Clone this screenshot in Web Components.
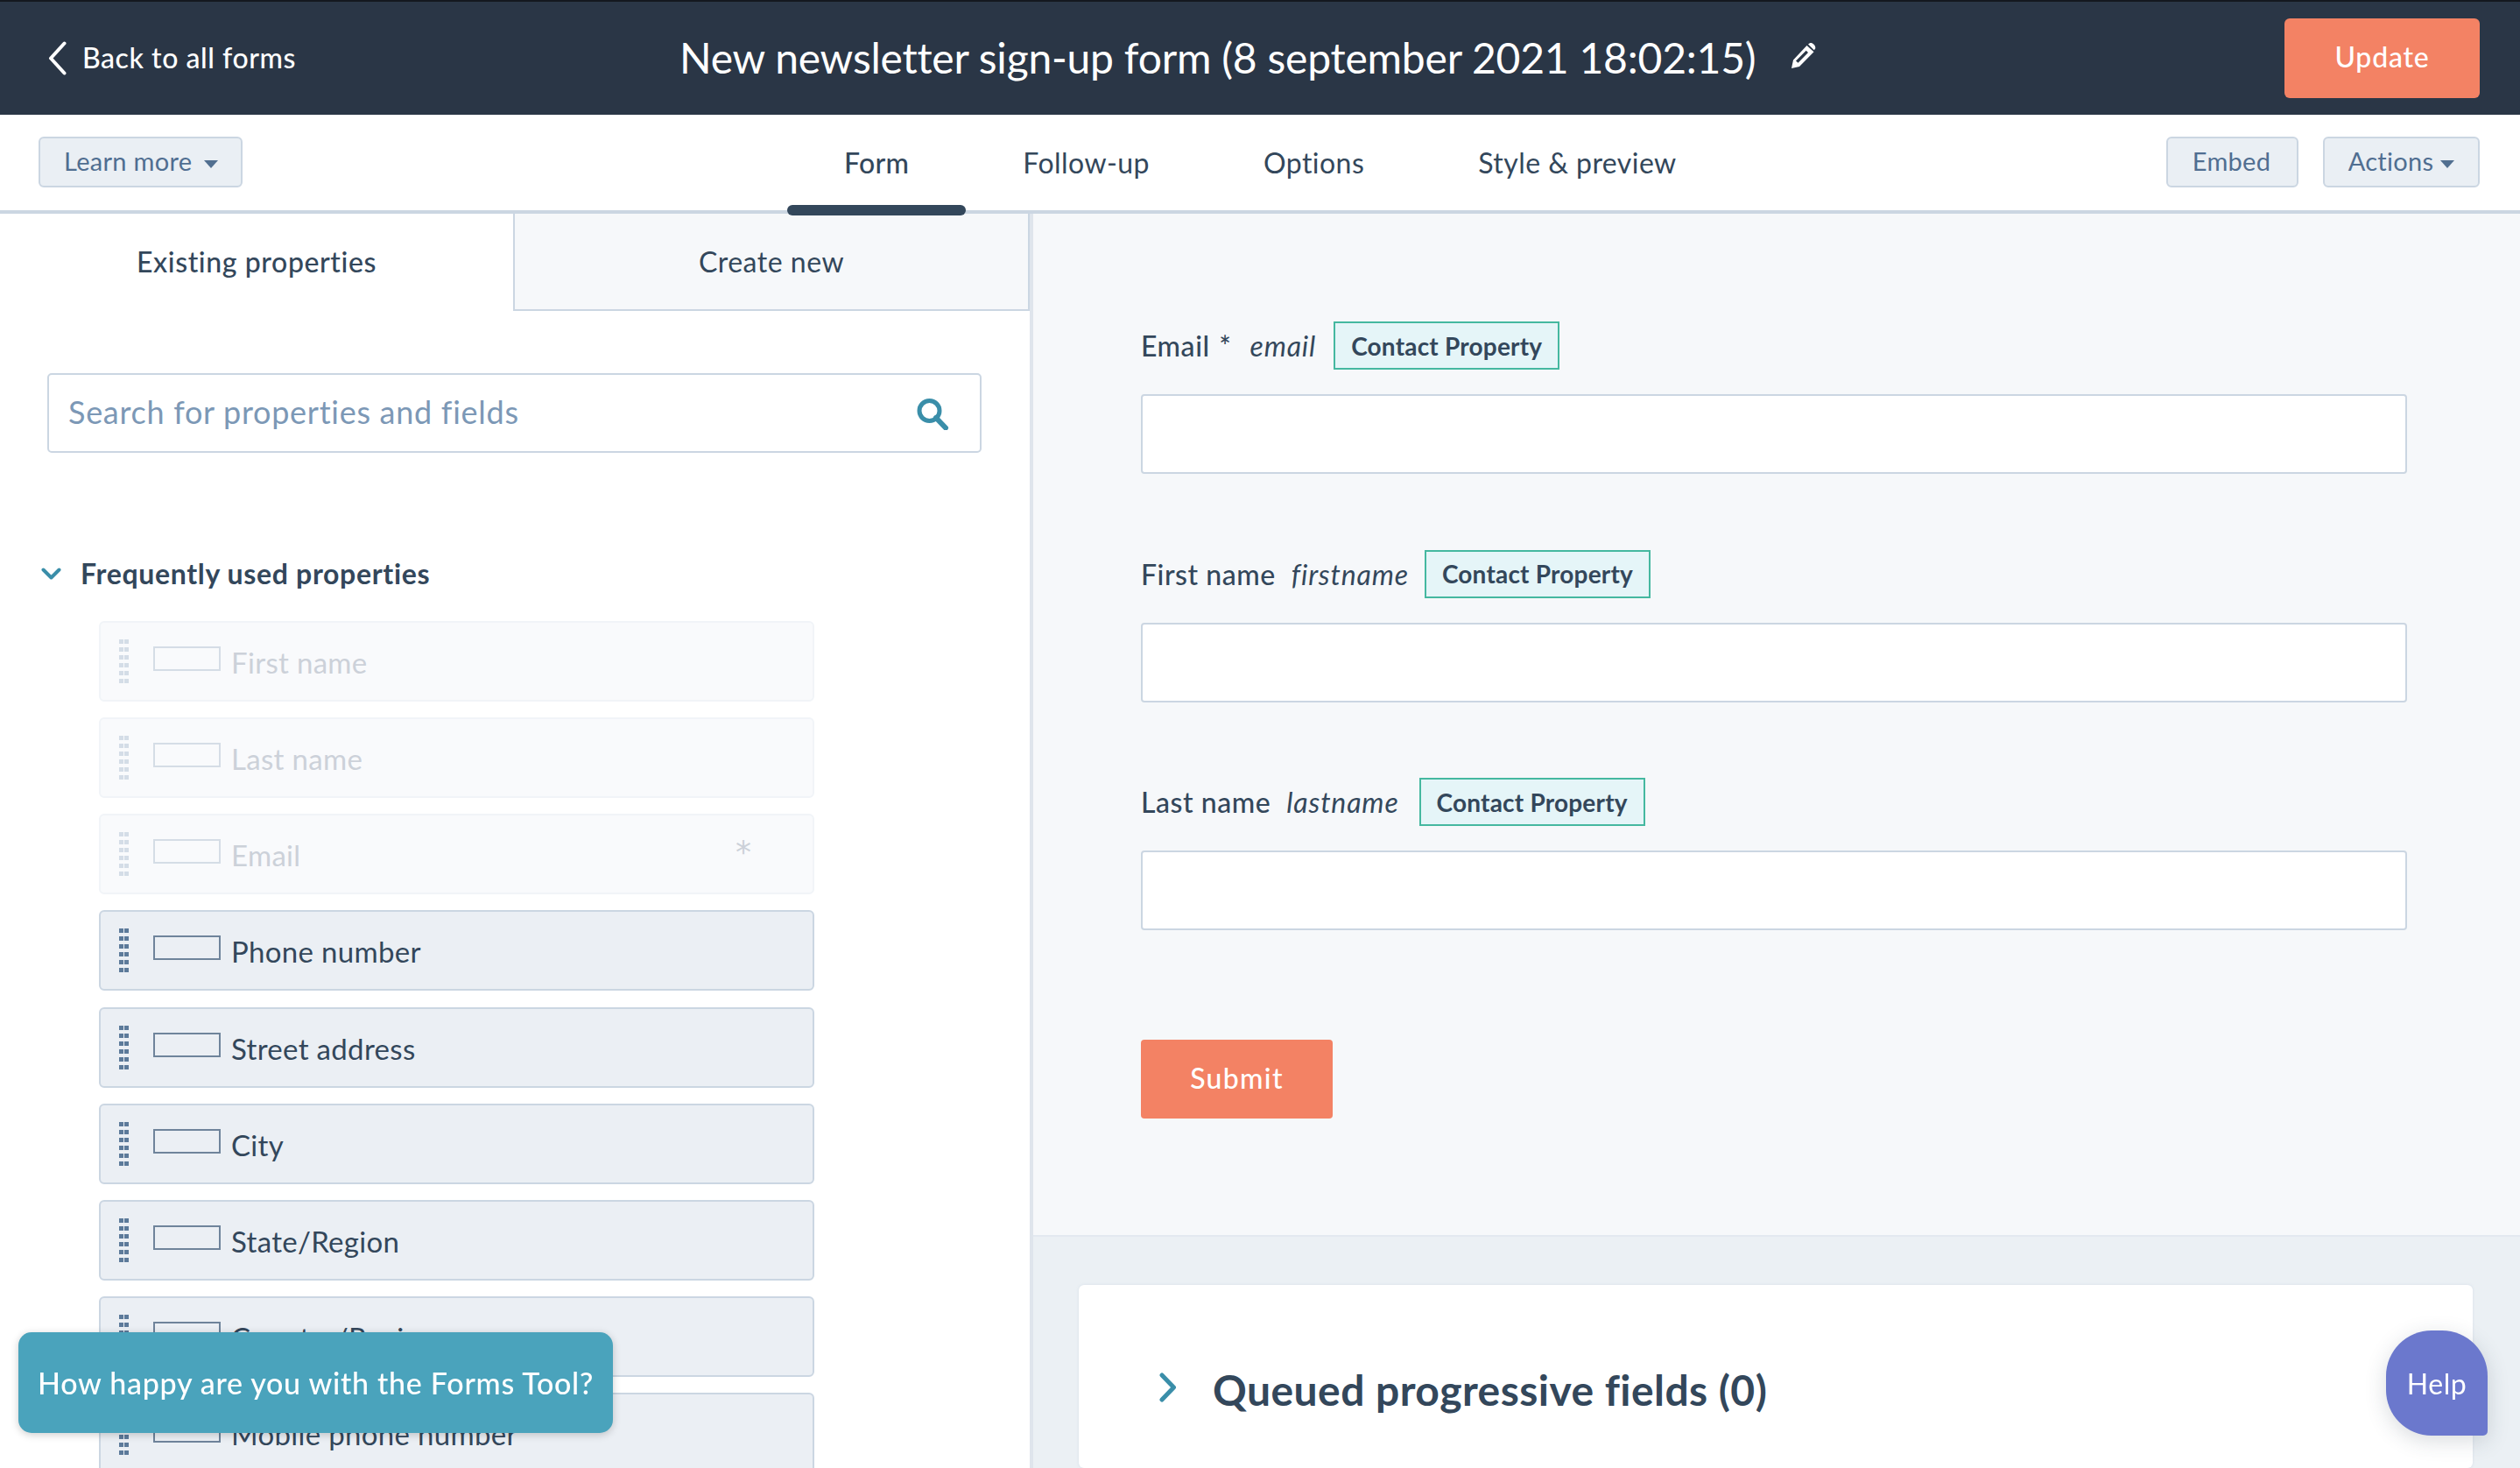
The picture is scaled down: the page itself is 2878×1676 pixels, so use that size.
<!DOCTYPE html>
<html lang="en"><head><meta charset="utf-8"><title>Form editor</title>
<style>
html,body{margin:0;padding:0;height:1676px;overflow:hidden;background:#fff}
body{font-family:Lato,"Noto Sans",sans-serif;color:#33475b}
</style></head><body>
<form-app></form-app>
<script>
const def=(name,css,html,init)=>{customElements.define(name,class extends HTMLElement{connectedCallback(){if(this.shadowRoot)return;const r=this.attachShadow({mode:'open'});r.innerHTML='<style>'+css+'</style>'+(typeof html==='function'?html(this):html);if(init)init(this,r);}})};
const caret='<svg width="16" height="9" viewBox="0 0 16 9"><path d="M0 0h16L8 9z" fill="#516f90"/></svg>';

def('top-bar',`
:host{display:flex;align-items:center;box-sizing:border-box;height:131px;background:#2a3646;border-top:2px solid #14181f;color:#fff;padding:0 46px 0 55px}
.back{display:flex;align-items:center;gap:18px;width:721px;font-size:32px;font-weight:500;letter-spacing:.55px}
.back span{margin-top:-2px}
h1{margin:0;font-size:48px;font-weight:400;letter-spacing:-.22px;white-space:nowrap;line-height:60px;margin-top:-2px}
svg.p{margin-left:41px;margin-top:-6px}
.sp{flex:1}
`,`<div class="back"><svg width="21" height="39" viewBox="0 0 21 39"><path d="M18.500 2.500L3 19.500L18.500 36.500" fill="none" stroke="#fff" stroke-width="4" stroke-linecap="round" stroke-linejoin="round"/></svg><span>Back to all forms</span></div>
<h1>New newsletter sign-up form (8 september 2021 18:02:15)</h1>
<svg class="p" width="28" height="29" viewBox="0 0 28 29"><path d="M19 1.500l1.500-1c1.500-.8 3.500-.3 5 1.200s2.300 3.500 1.500 5l-1.200 1.600zM17.500 3l8 7.200L9 27 0 29l2-9.500zM5 20.500l2.500 2.300L19 11l-2.300-2.200z" fill="#fff" fill-rule="evenodd"/></svg>
<span class="sp"></span><ui-btn primary>Update</ui-btn>`);

def('ui-btn',`
:host{display:inline-flex;align-items:center;justify-content:center;box-sizing:border-box;border-radius:6px;font-size:29px;letter-spacing:.3px;white-space:nowrap}
:host([secondary]){height:58px;background:#eaeff4;border:2px solid #cbd6e2;color:#506e91;padding:0 26px 3px 27px;gap:14px}
:host([primary]){width:223px;height:91px;background:#f38264;color:#fff;font-size:32px;font-weight:500;letter-spacing:.8px;padding-bottom:5px}
:host([submit]){width:219px;height:90px;background:#f38264;color:#fff;font-size:32px;font-weight:500;letter-spacing:1.3px;border-radius:4px}
svg{margin-top:7px}
`,h=>`<slot></slot>${h.hasAttribute('caret')?caret:''}`);

def('sub-nav',`
:host{display:flex;box-sizing:border-box;height:113px;border-bottom:4px solid #cbd6e2;position:relative;z-index:2;background:#fff}
.l{width:899px;box-sizing:border-box;padding:25px 0 0 44px}
.t{display:flex;flex:1}
.tab{padding:0 65px;font-size:32px;letter-spacing:.45px;line-height:60px;height:109px;box-sizing:border-box;padding-top:25px;position:relative;white-space:nowrap}
.tab.on{font-weight:500;letter-spacing:.3px}
.tab.on::after{content:"";position:absolute;left:0;right:0;bottom:-6px;height:12px;background:#33475b;border-radius:6px}
.r{display:flex;gap:28px;padding:25px 46px 0 0}
`,`<div class="l"><ui-btn secondary caret>Learn more</ui-btn></div>
<div class="t"><div class="tab on">Form</div><div class="tab">Follow-up</div><div class="tab">Options</div><div class="tab">Style &amp; preview</div></div>
<div class="r"><ui-btn secondary style="width:151px;padding:0 2px 3px 0">Embed</ui-btn><ui-btn secondary caret style="width:179px;padding:0 0 3px;gap:8px">Actions</ui-btn></div>`);

def('prop-tabs',`
:host{display:flex;height:111px;font-size:32px;letter-spacing:.6px}
div{flex:1;display:flex;align-items:center;justify-content:center;box-sizing:border-box;padding-bottom:3px}
.a{font-weight:500}
.b{background:#f6f8fa;border:solid #cbd6e2;border-width:0 2px 2px 2px;letter-spacing:.5px;padding-bottom:1px}
`,`<div class="a">Existing properties</div><div class="b">Create new</div>`);

def('prop-search',`
:host{display:flex;align-items:center;justify-content:space-between;box-sizing:border-box;height:91px;margin:71px 55px 0 54px;border:2px solid #cbd6e2;border-radius:5px;background:#fff;padding:0 35px 3px 22px;font-size:36px;letter-spacing:.72px;color:#7c98b6}
svg{margin-top:6px}
`,`<span>Search for properties and fields</span><svg width="37" height="36" viewBox="0 0 37 36"><circle cx="14.500" cy="14" r="11.500" fill="none" stroke="#3a8ea9" stroke-width="5"/><path d="M22 22l11 11.500" stroke="#3a8ea9" stroke-width="6" stroke-linecap="round"/></svg>`);

def('prop-row',`
:host{display:flex;box-sizing:border-box;height:92px;background:#ebeff4;border:2px solid #cbd6e2;border-radius:6px;padding:19px 0 0 21px;position:relative;color:#33475b;font-size:33px;letter-spacing:.32px}
:host([off]){background:#f9fafc;border-color:#f1f4f8;color:#ccd1d9}
.d{display:grid;grid-template-columns:5px 5px;gap:4px 1px;height:50px;width:11px;flex:none}
.d i{background:#5c7a9a}
:host([off]) .d i{background:#d4dde7}
.b{width:77px;height:28px;box-sizing:border-box;border:2px solid #6f849b;margin:8px 12px 0 28px;flex:none}
:host([off]) .b{border-color:#d5dde6}
.x{line-height:40px;margin-top:6px;white-space:nowrap}
.s{position:absolute;left:725px;top:16px;font:36px/52px "DejaVu Sans",sans-serif}
`,h=>`<div class="d">${'<i></i>'.repeat(12)}</div><div class="b"></div><span class="x"><slot></slot></span>${h.hasAttribute('req')?'<span class="s">*</span>':''}`);

def('prop-panel',`
:host{display:block;width:1180px;flex:none;box-sizing:border-box;border-right:4px solid #dfe5ec;height:100%;overflow:hidden;background:#fff}
h2{display:flex;align-items:center;gap:22px;margin:116px 0 32px 47px;font-size:32px;font-weight:700;line-height:44px;letter-spacing:.67px}
.l{display:flex;flex-direction:column;gap:18.150px;margin:0 246px 0 113px}
`,`<prop-tabs></prop-tabs><prop-search></prop-search>
<h2><svg width="23" height="14" viewBox="0 0 23 14"><path d="M2.500 2.500L11.500 11.500L20.500 2.500" fill="none" stroke="#3a8ea9" stroke-width="4" stroke-linecap="round" stroke-linejoin="round"/></svg>Frequently used properties</h2>
<div class="l"><prop-row off>First name</prop-row><prop-row off>Last name</prop-row><prop-row off req>Email</prop-row><prop-row>Phone number</prop-row><prop-row>Street address</prop-row><prop-row>City</prop-row><prop-row>State/Region</prop-row><prop-row>Country/Region</prop-row><prop-row>Mobile phone number</prop-row></div>`);

def('form-field',`
:host{display:block;margin-bottom:86.500px}
.h{display:flex;align-items:center;height:55px;font-size:32px;letter-spacing:.55px;white-space:nowrap}
b{font-weight:500}
b span{margin-left:2px}
i{margin-left:var(--ig,18px);letter-spacing:.85px}
.t{margin-left:var(--tg,20px);height:55px;box-sizing:border-box;border:2px solid #45b8a0;background:#e5f5f8;font-size:28px;font-weight:700;padding:0 18px;display:flex;align-items:center;letter-spacing:.2px}
.in{height:91px;margin-top:28px;box-sizing:border-box;background:#fff;border:2px solid #cbd6e2;border-radius:4px}
`,h=>{const l=h.getAttribute('label').replace(' *',' <span>*</span>');return `<div class="h"><b>${l}</b><i>${h.getAttribute('name')}</i><span class="t">Contact Property</span></div><div class="in"></div>`});

def('form-pane',`
:host{display:flex;flex-direction:column;flex:1;min-width:0;background:#ebf0f4;overflow:hidden}
.f{box-sizing:border-box;height:1168px;flex:none;background:#f6f8fa;border-bottom:2px solid #e3e9f0;padding:123px 129px 0 123px}
.c{margin:55px 54px 0 52px;height:300px;background:#fff;border-radius:6px;box-shadow:0 0 3px rgba(203,214,226,.7);display:flex;align-items:flex-start;padding:93px 0 0 92px;box-sizing:border-box;gap:41px}
h3{margin:0;font-size:48px;font-weight:700;letter-spacing:.45px;line-height:60px;white-space:nowrap;margin-top:-3px}
svg{flex:none;margin-top:7px}
`,`<div class="f"><form-field label="Email *" name="email" style="--ig:21px"></form-field><form-field label="First name" name="firstname" style="--tg:18px"></form-field><form-field label="Last name" name="lastname" style="--tg:23px"></form-field><ui-btn submit style="margin-top:125px;display:flex;padding-bottom:4px">Submit</ui-btn></div>
<div class="c"><svg width="20" height="34" viewBox="0 0 20 34"><path d="M3 3L16.500 17L3 31" fill="none" stroke="#3a8ea9" stroke-width="5" stroke-linecap="round" stroke-linejoin="round"/></svg><h3>Queued progressive fields (0)</h3></div>`);

def('feedback-tab',`
:host{position:fixed;left:21px;top:1521px;width:679px;height:115px;box-sizing:border-box;background:#4aa3bc;color:#fff;border-radius:15px;display:flex;align-items:center;justify-content:center;font-size:34px;font-weight:500;letter-spacing:.72px;box-shadow:0 2px 10px rgba(0,0,0,.2);z-index:5;white-space:nowrap}
`,`<slot></slot>`);
def('help-bubble',`
:host{position:fixed;left:2725px;top:1519px;width:116px;height:120px;background:#6b78cd;color:#fff;border-radius:52px 52px 5px 52px;display:flex;align-items:center;justify-content:center;font-size:32px;letter-spacing:.6px;box-shadow:0 6px 24px rgba(45,62,80,.18);z-index:5}
`,`<slot></slot>`);

def('form-app',`
:host{display:flex;flex-direction:column;height:1676px;overflow:hidden}
.m{display:flex;flex:1;min-height:0}
`,`<top-bar></top-bar><sub-nav></sub-nav><div class="m"><prop-panel></prop-panel><form-pane></form-pane></div><feedback-tab>How happy are you with the Forms Tool?</feedback-tab><help-bubble>Help</help-bubble>`);
</script>
</body></html>
